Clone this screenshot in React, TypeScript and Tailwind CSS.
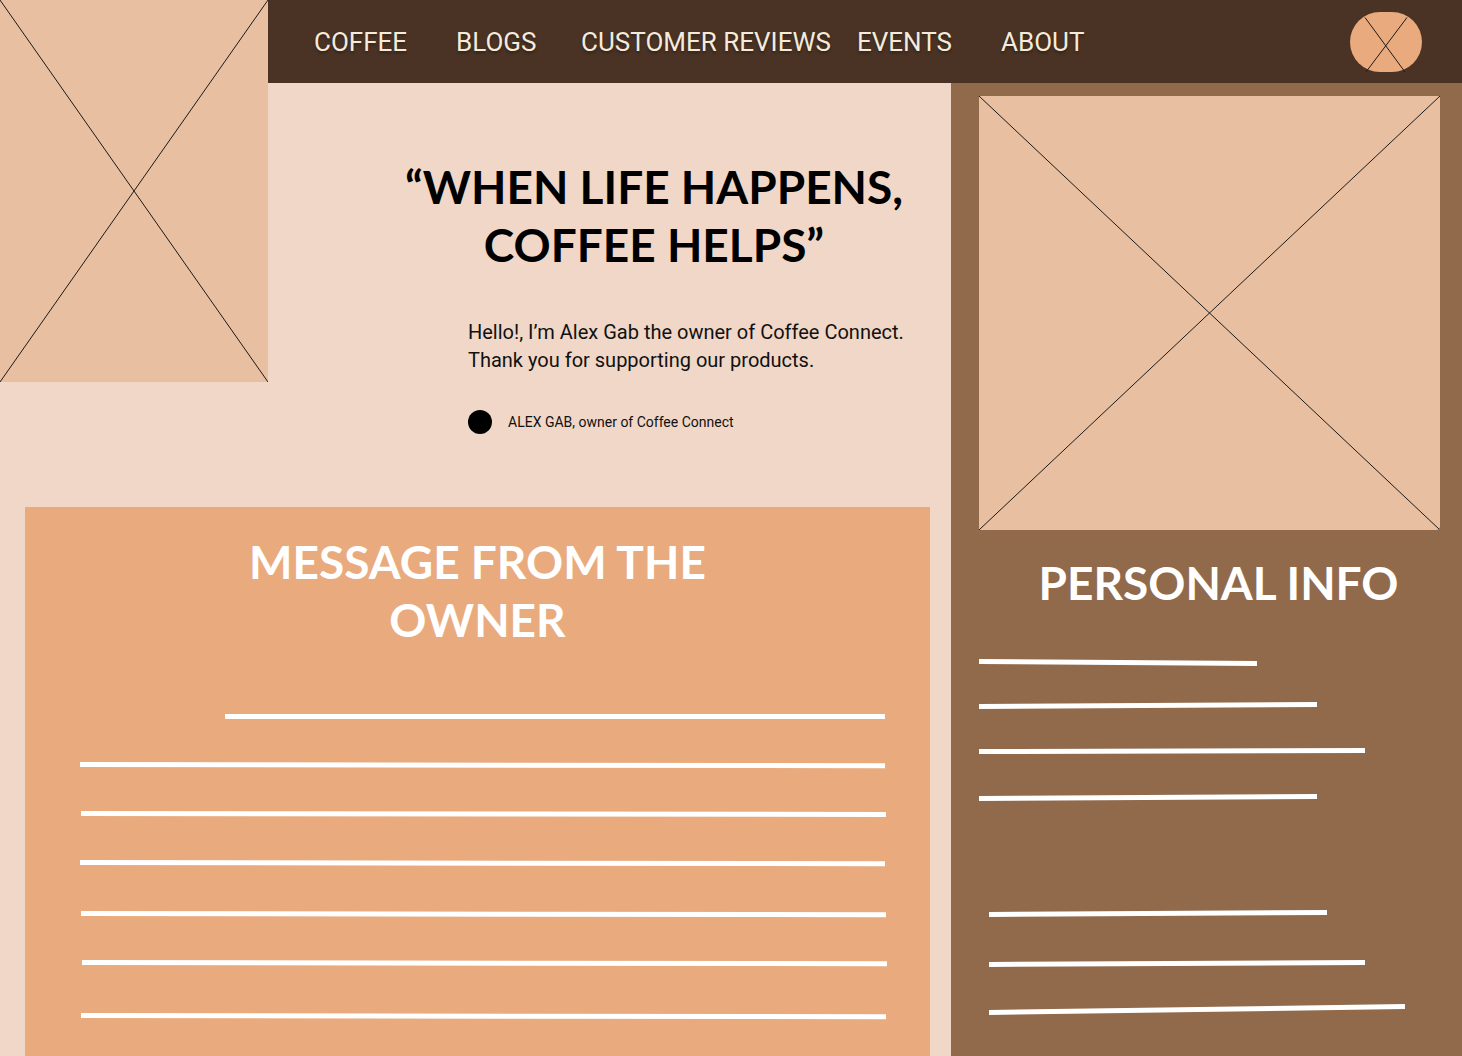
import React from 'react'

const navItems = [
  { label: 'COFFEE', cls: 'w-[142px]' },
  { label: 'BLOGS', cls: 'w-[125px]' },
  { label: 'CUSTOMER REVIEWS', cls: 'w-[276px]' },
  { label: 'EVENTS', cls: 'w-[144px]' },
  { label: 'ABOUT', cls: 'w-[120px]' },
]

const messageLines = [
  'mt-[65px] ml-[200px] w-[660px]',
  'mt-[43px] ml-[55px] w-[805px] rotate-[0.09deg]',
  'mt-[44px] ml-[56px] w-[805px] rotate-[0.07deg]',
  'mt-[44px] ml-[55px] w-[805px] rotate-[0.09deg]',
  'mt-[46px] ml-[56px] w-[805px] rotate-[0.09deg]',
  'mt-[44px] ml-[57px] w-[805px] rotate-[0.09deg]',
  'mt-[48px] ml-[56px] w-[805px] rotate-[0.09deg]',
]

const infoLines = [
  'mt-[47px] ml-[28px] w-[278px] rotate-[0.4deg]',
  'mt-[40px] ml-[28px] w-[338px] rotate-[-0.34deg]',
  'mt-[40px] ml-[28px] w-[386px] rotate-[-0.15deg]',
  'mt-[42px] ml-[28px] w-[338px] rotate-[-0.34deg]',
  'mt-[111px] ml-[38px] w-[338px] rotate-[-0.34deg]',
  'mt-[45px] ml-[38px] w-[376px] rotate-[-0.3deg]',
  'mt-[43px] ml-[38px] w-[416px] rotate-[-0.83deg]',
]

const Placeholder: React.FC<{ className?: string }> = ({ className = '' }) => (
  <div className={`bg-[#e9bfa1] ${className}`}>
    <svg className="block w-full h-full" viewBox="0 0 100 100" preserveAspectRatio="none">
      <line x1="0" y1="0" x2="100" y2="100" stroke="#1a1a1a" strokeWidth="1" vectorEffect="non-scaling-stroke" />
      <line x1="100" y1="0" x2="0" y2="100" stroke="#1a1a1a" strokeWidth="1" vectorEffect="non-scaling-stroke" />
    </svg>
  </div>
)

const headline = "font-['Lato','Noto_Sans',sans-serif] font-bold"

export default function App() {
  return (
    <div className="w-[1462px] h-[1056px] overflow-hidden bg-[#f0d7c7] grid grid-cols-[268px_683px_1fr] grid-rows-[83px_424px_1fr] font-['Roboto',sans-serif]">
      {/* top-left picture */}
      <Placeholder className="col-start-1 row-start-1 row-span-2 h-[382px] self-start" />

      {/* nav */}
      <nav className="col-start-2 col-span-2 row-start-1 bg-[#4a3324] flex items-center pl-[46px] pr-[40px]">
        {navItems.map((item) => (
          <a
            key={item.label}
            href="#"
            className={`${item.cls} shrink-0 text-[26px] leading-none text-[#f5ebdd] [text-shadow:0_2px_3px_rgba(0,0,0,0.35)]`}
          >
            {item.label}
          </a>
        ))}
        <div className="ml-auto relative w-[72px] h-[60px] rounded-full bg-[#e9ab7e]">
          <svg className="absolute left-0 top-0 w-[72px] h-[62px] overflow-visible" viewBox="0 0 72 62">
            <line x1="15" y1="5.5" x2="55" y2="60" stroke="#1a1a1a" strokeWidth="1" />
            <line x1="57" y1="5.5" x2="16" y2="60" stroke="#1a1a1a" strokeWidth="1" />
          </svg>
        </div>
      </nav>

      {/* hero */}
      <section className="col-start-2 row-start-2 pt-[75px]">
        <h1 className={`${headline} ml-[130px] w-[512px] text-center text-[46px] leading-[58px] text-black`}>
          “WHEN LIFE HAPPENS,
          <br />
          COFFEE HELPS”
        </h1>
        <p className="ml-[200px] mt-[44px] text-[20px] leading-[28px] text-[#111]">
          Hello!, I’m Alex Gab the owner of Coffee Connect.
          <br />
          Thank you for supporting our products.
        </p>
        <div className="ml-[200px] mt-[36px] flex items-center gap-4">
          <span className="w-6 h-6 rounded-full bg-black" />
          <span className="text-[14px] text-[#111]">ALEX GAB, owner of Coffee Connect</span>
        </div>
      </section>

      {/* right panel */}
      <aside className="col-start-3 row-start-2 row-span-2 bg-[#91694b] pt-[13px]">
        <Placeholder className="ml-[28px] w-[461px] h-[434px] rounded-br-[4px] overflow-hidden" />
        <h2 className={`${headline} mt-[24px] pl-[24px] text-center text-[46px] leading-[58px] text-white`}>
          PERSONAL INFO
        </h2>
        {infoLines.map((cls, i) => (
          <div key={i} className={`${cls} h-[5px] bg-white origin-left`} />
        ))}
      </aside>

      {/* message card */}
      <section className="col-start-1 col-span-2 row-start-3 ml-[25px] mr-[21px] bg-[#e9ab7e] pt-[26px]">
        <h2 className={`${headline} text-center text-[46px] leading-[58px] text-white`}>
          MESSAGE FROM THE
          <br />
          OWNER
        </h2>
        {messageLines.map((cls, i) => (
          <div key={i} className={`${cls} h-[5px] bg-white origin-left`} />
        ))}
      </section>
    </div>
  )
}
